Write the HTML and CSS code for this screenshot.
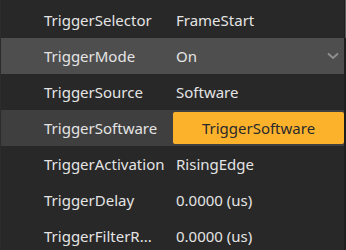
FILE: index.html
```html
<!DOCTYPE html>
<html lang="en">
<head>
    <meta charset="UTF-8">
    <title>Trigger Properties</title>
    <link rel="stylesheet" href="styles.css">
</head>
<body>
    <div class="panel">
        <div class="prop-list">
            <div class="prop-row">
                <div class="prop-name">TriggerSelector</div>
                <div class="prop-value">FrameStart</div>
            </div>
            <div class="prop-row hover">
                <div class="prop-name">TriggerMode</div>
                <div class="prop-value select">
                    <span>On</span>
                    <svg class="chevron" width="12" height="8" viewBox="0 0 12 8">
                        <polyline points="1,1.5 6,6 11,1.5" fill="none" stroke="#8e8e8e" stroke-width="2"/>
                    </svg>
                </div>
            </div>
            <div class="prop-row">
                <div class="prop-name">TriggerSource</div>
                <div class="prop-value">Software</div>
            </div>
            <div class="prop-row selected">
                <div class="prop-name">TriggerSoftware</div>
                <div class="prop-value">
                    <button class="cmd-btn">TriggerSoftware</button>
                </div>
            </div>
            <div class="prop-row">
                <div class="prop-name">TriggerActivation</div>
                <div class="prop-value">RisingEdge</div>
            </div>
            <div class="prop-row">
                <div class="prop-name">TriggerDelay</div>
                <div class="prop-value">0.0000 (us)</div>
            </div>
            <div class="prop-row">
                <div class="prop-name" title="TriggerFilterRaisingEdge">TriggerFilterR...</div>
                <div class="prop-value">0.0000 (us)</div>
            </div>
        </div>
        <div class="scrollbar">
            <div class="thumb"></div>
        </div>
    </div>
</body>
</html>
```

FILE: styles.css
```css
* {
    margin: 0;
    padding: 0;
    box-sizing: border-box;
}

body {
    background: #282828;
    color: #e4e4e4;
    font-family: 'Noto Sans', sans-serif;
    font-size: 15px;
    overflow: hidden;
}

.panel {
    display: flex;
    height: 250px;
}

.prop-list {
    flex: 1;
    padding-top: 2px;
    border-left: 1px solid #2c2c2c;
}

.prop-row {
    display: flex;
    height: 36px;
    line-height: 36px;
}

.prop-row.hover {
    background: #4e4e4e;
}

.prop-row.selected {
    background: #3f3f3f;
}

.prop-name {
    width: 172px;
    padding-left: 43px;
    padding-right: 2px;
    white-space: nowrap;
    overflow: hidden;
}

.prop-value {
    flex: 1;
    padding-left: 3px;
    display: flex;
    align-items: center;
}

.prop-value.select {
    justify-content: space-between;
    padding-right: 5px;
}

.chevron {
    display: block;
}

.prop-row.selected .prop-value {
    padding: 2px 0 2px 0;
}

.cmd-btn {
    width: 100%;
    height: 32px;
    border: none;
    border-radius: 2px;
    background: #fdb22c;
    color: #2a2a2a;
    font-family: 'Noto Sans', sans-serif;
    font-size: 15px;
}

.scrollbar {
    width: 2px;
    background: #1f1f1f;
}

.thumb {
    width: 1px;
    height: 38px;
    margin-left: 1px;
    background: #5a5a5a;
}
```
